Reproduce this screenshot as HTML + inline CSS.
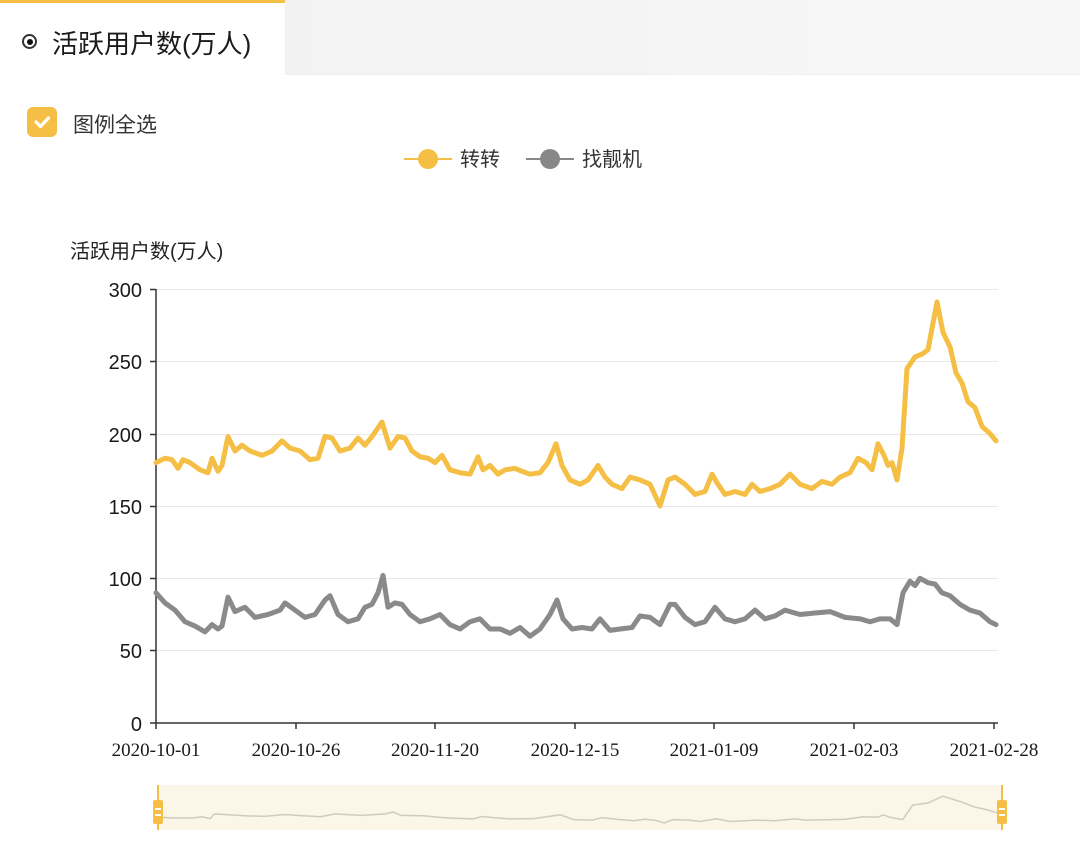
<!DOCTYPE html>
<html><head><meta charset="utf-8"><style>
html,body{margin:0;padding:0;background:#fff;width:1080px;height:852px;overflow:hidden;font-family:"Liberation Sans","Noto Sans CJK SC",sans-serif;}
.top{position:absolute;left:0;top:0;width:1080px;height:74px;background:linear-gradient(90deg,#f1f1f1,#f7f7f7);border-bottom:1px solid #eee;}
.tab{position:absolute;left:0;top:0;width:285px;height:75px;background:#fff;border-top:3px solid #f5bf45;box-sizing:border-box;}
.tab .t{position:absolute;left:52px;top:21px;font-size:26px;color:#1a1a1a;}
.radio{position:absolute;left:22px;top:31px;width:15px;height:15px;border:2px solid #333;border-radius:50%;box-sizing:border-box;}
.radio:after{content:"";position:absolute;left:2.5px;top:2.5px;width:6px;height:6px;border-radius:50%;background:#111;}
.cb{position:absolute;left:27px;top:107px;width:30px;height:30px;border-radius:6px;background:#f5bf45;}
.lbl{position:absolute;left:73px;top:109px;font-size:21px;color:#333;}
</style></head><body>
<div class="top"></div>
<div class="tab"><div class="radio"></div><div class="t">活跃用户数(万人)</div></div>
<div class="cb"><svg width="30" height="30"><path d="M9 15 L13.5 19.5 L21.5 11" stroke="#fff" stroke-width="3.2" fill="none" stroke-linecap="round" stroke-linejoin="round"/></svg></div>
<div class="lbl">图例全选</div>
<svg style="position:absolute;left:0;top:0" width="1080" height="852">
<line x1="404" y1="159" x2="452" y2="159" stroke="#f5bf45" stroke-width="2"/>
<circle cx="428" cy="159" r="10" fill="#f5bf45"/>
<line x1="526" y1="159" x2="574" y2="159" stroke="#888" stroke-width="2"/>
<circle cx="550" cy="159" r="10" fill="#888"/>
<g stroke="#e8e8e8" stroke-width="1">
<line x1="156" y1="289.5" x2="998" y2="289.5"/><line x1="156" y1="361.5" x2="998" y2="361.5"/><line x1="156" y1="434.5" x2="998" y2="434.5"/><line x1="156" y1="506.5" x2="998" y2="506.5"/><line x1="156" y1="578.5" x2="998" y2="578.5"/><line x1="156" y1="650.5" x2="998" y2="650.5"/>
</g>
<g stroke="#333" stroke-width="1.5">
<line x1="156" y1="289" x2="156" y2="723"/><line x1="150" y1="289.5" x2="156" y2="289.5"/><line x1="150" y1="361.5" x2="156" y2="361.5"/><line x1="150" y1="434.5" x2="156" y2="434.5"/><line x1="150" y1="506.5" x2="156" y2="506.5"/><line x1="150" y1="578.5" x2="156" y2="578.5"/><line x1="150" y1="650.5" x2="156" y2="650.5"/><line x1="150" y1="723" x2="156" y2="723"/>
<line x1="156" y1="723" x2="998" y2="723"/>
<line x1="156" y1="723" x2="156" y2="729"/><line x1="296" y1="723" x2="296" y2="729"/><line x1="435" y1="723" x2="435" y2="729"/><line x1="575" y1="723" x2="575" y2="729"/><line x1="714" y1="723" x2="714" y2="729"/><line x1="854" y1="723" x2="854" y2="729"/><line x1="994" y1="723" x2="994" y2="729"/>
</g>
<g font-family="Liberation Sans,sans-serif" font-size="20" fill="#1a1a1a" text-anchor="end">
<text x="142" y="297">300</text><text x="142" y="369">250</text><text x="142" y="442">200</text><text x="142" y="514">150</text><text x="142" y="586">100</text><text x="142" y="658">50</text><text x="142" y="731">0</text>
</g>
<g font-family="Liberation Serif,serif" font-size="19" fill="#1a1a1a" text-anchor="middle">
<text x="156" y="756">2020-10-01</text><text x="296" y="756">2020-10-26</text><text x="435" y="756">2020-11-20</text><text x="575" y="756">2020-12-15</text><text x="714" y="756">2021-01-09</text><text x="854" y="756">2021-02-03</text><text x="994" y="756">2021-02-28</text>
</g>
<text x="70" y="258" font-size="20" fill="#222" font-family="Liberation Sans,Noto Sans CJK SC,sans-serif">活跃用户数(万人)</text>
<text x="460" y="166" font-size="20" fill="#333" font-family="Liberation Sans,Noto Sans CJK SC,sans-serif">转转</text>
<text x="582" y="166" font-size="20" fill="#333" font-family="Liberation Sans,Noto Sans CJK SC,sans-serif">找靓机</text>
<g transform="translate(0,723) scale(1,-1.4467)" fill="none" stroke-linejoin="round" stroke-linecap="round">
<polyline vector-effect="non-scaling-stroke" stroke="#f5bf45" stroke-width="5" points="156,180 165,183 172,182 178,176 183,182 190,180 200,175 208,173 212,183 218,174 222,178 228,198 235,188 242,192 250,188 262,185 272,188 282,195 290,190 300,188 310,182 318,183 325,198 332,197 340,188 350,190 358,197 365,192 372,198 382,208 390,190 398,198 405,197 412,188 420,184 428,183 435,180 442,185 450,175 460,173 470,172 478,184 483,175 490,178 498,172 505,175 515,176 522,174 530,172 540,173 548,180 556,193 562,178 570,168 580,165 588,168 598,178 605,170 612,165 622,162 630,170 640,168 650,165 660,150 668,168 675,170 685,165 695,158 705,160 712,172 718,165 725,158 735,160 745,158 752,165 760,160 770,162 780,165 790,172 800,165 812,162 822,167 832,165 840,170 850,173 858,183 866,180 872,175 878,193 884,185 888,178 892,180 897,168 902,190 907,245 915,253 922,255 928,258 937,291 943,270 950,260 956,242 962,235 968,222 975,218 982,205 990,200 996,195"/>
<polyline vector-effect="non-scaling-stroke" stroke="#8a8a8a" stroke-width="5" points="156,90 165,83 175,78 185,70 195,67 205,63 212,68 218,65 222,67 228,87 235,77 245,80 255,73 268,75 280,78 285,83 295,78 305,73 315,75 325,85 330,88 338,75 348,70 358,72 365,80 372,82 378,90 383,102 388,80 395,83 402,82 410,75 420,70 430,72 440,75 450,68 460,65 470,70 480,72 490,65 500,65 510,62 520,66 530,60 540,65 550,75 557,85 563,72 572,65 582,66 592,65 600,72 610,64 620,65 632,66 640,74 650,73 660,68 670,82 675,82 685,73 695,68 705,70 715,80 725,72 735,70 745,72 755,78 765,72 775,74 785,78 800,75 815,76 830,77 845,73 860,72 870,70 880,72 890,72 897,68 903,90 910,98 915,95 920,100 928,97 935,96 942,90 950,88 960,82 970,78 980,76 990,70 996,68"/>
</g>
<rect x="158" y="785" width="844" height="45" fill="#fbf6e8"/>
<g transform="translate(158,851.5) scale(1.005,-0.19)" fill="none">
<polyline vector-effect="non-scaling-stroke" stroke="#cfcbbd" stroke-width="1.5" points="0,180 16,176 34,176 44,183 52,173 56,198 86,188 106,185 126,195 144,188 162,183 176,198 202,190 226,198 234,208 242,190 264,188 279,180 294,175 314,172 322,184 334,178 349,172 374,173 400,193 414,168 432,165 442,178 456,170 474,162 484,170 494,165 504,150 512,168 529,165 539,158 556,172 569,158 596,165 614,162 634,172 644,165 666,167 684,170 702,183 716,180 722,193 728,180 741,168 751,245 766,255 781,291 800,260 812,235 826,218 834,205 840,200"/>
</g>
<line x1="158" y1="785" x2="158" y2="830" stroke="#f5bf45" stroke-width="2"/>
<line x1="1002" y1="785" x2="1002" y2="830" stroke="#f5bf45" stroke-width="2"/>
<rect x="153" y="800" width="10" height="24" rx="2" fill="#f5bf45"/>
<rect x="997" y="800" width="10" height="24" rx="2" fill="#f5bf45"/>
<g fill="#fff"><rect x="155" y="808" width="6" height="2"/><rect x="155" y="814" width="6" height="2"/><rect x="999" y="808" width="6" height="2"/><rect x="999" y="814" width="6" height="2"/></g>
</svg>
</body></html>
